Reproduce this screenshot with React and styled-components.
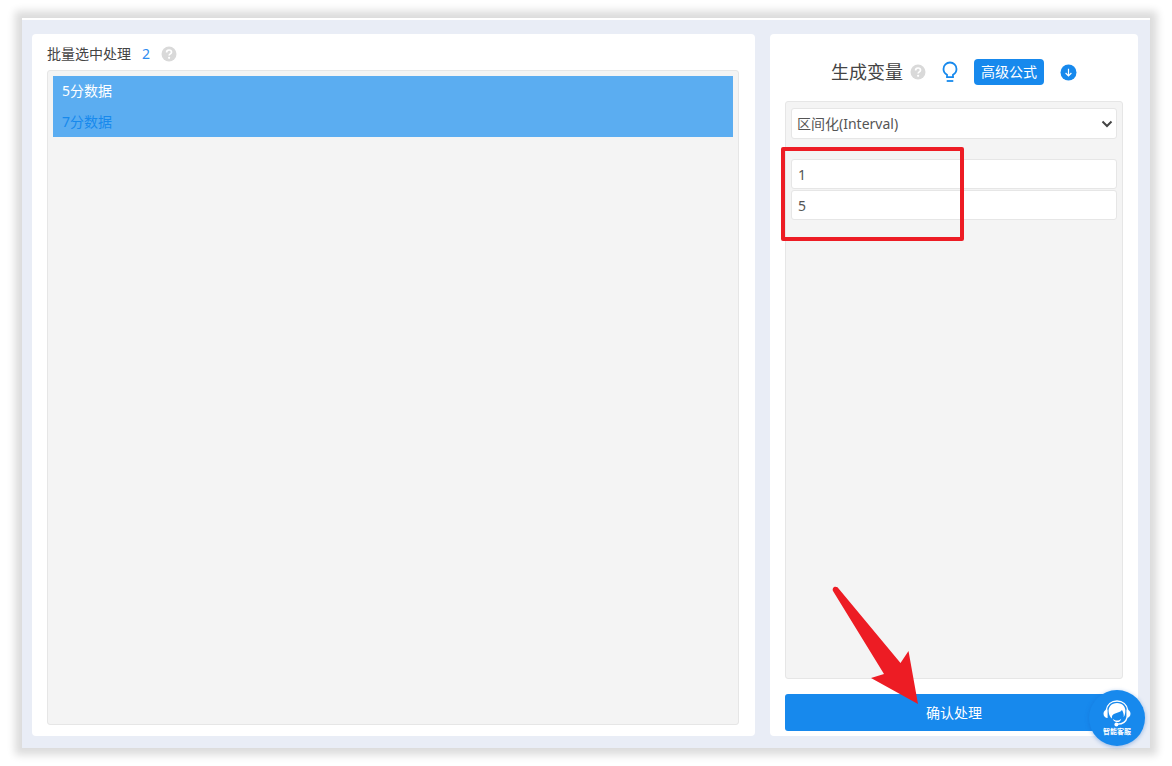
/**
 * Variable generation page.
 * Left panel lists the selected titles, right panel holds the settings of the chosen method.
 */

import { useState } from "react";
import styled, { createGlobalStyle } from "styled-components";

const GlobalStyle = createGlobalStyle`
  * {
    box-sizing: border-box;
  }

  body {
    margin: 0;
    background: #fff;
    color: #444;
    font-family: "Noto Sans", "Noto Sans CJK SC", sans-serif;
    font-size: 14px;
    line-height: 20px;
  }

  button,
  input,
  select {
    font: inherit;
  }
`;

const Page = styled.div`
  display: flex;
  min-height: 100vh;
  padding: 18px 22px;
`;

const Frame = styled.div`
  position: relative;
  flex: 1;
  display: grid;
  grid-template-columns: minmax(0, 1fr) 368px;
  gap: 15px;
  padding: 14px 12px 12px 10px;
  background: #e9edf6;
  border-top: 2px solid #fff;
  box-shadow: 0 0 8px 7px #dcdcdc;
`;

const Panel = styled.section`
  display: flex;
  flex-direction: column;
  padding: ${(props) => props.$padding};
  background: #fff;
  border-radius: 4px;
`;

const Well = styled.div`
  flex: 1;
  padding: 5px;
  background: #f4f4f4;
  border: 1px solid #e6e6e6;
  border-radius: 3px;
`;

const ListHeader = styled.header`
  display: flex;
  align-items: center;
  gap: 11px;
  margin-bottom: 6px;
`;

const ListTitle = styled.h2`
  margin: 0;
  font-size: 14px;
  font-weight: 400;
`;

const Count = styled.span`
  color: #2d8cf0;
`;

const TitleList = styled.ul`
  display: grid;
  gap: 1px;
  margin: 0;
  padding: 0;
  list-style: none;
  background: #5badf1;
`;

const TitleItem = styled.li`
  padding: 0 9px;
  line-height: 30px;
  color: ${(props) => (props.$active ? "#fff" : "#1789ed")};
`;

const ToolHeader = styled.header`
  display: flex;
  align-items: center;
  justify-content: center;
  gap: 16px;
  height: 26px;
  margin-bottom: 16px;
`;

const ToolTitle = styled.h1`
  display: flex;
  align-items: center;
  gap: 7px;
  margin: 0;
  font-size: 18px;
  font-weight: 400;
  line-height: 26px;
`;

const IconButton = styled.button`
  display: flex;
  padding: 0;
  border: 0;
  background: none;
  cursor: pointer;

  svg {
    display: block;
  }
`;

const FormulaButton = styled.button`
  height: 26px;
  padding: 0 7px;
  border: 0;
  border-radius: 4px;
  background: #1789ed;
  color: #fff;
  cursor: pointer;
`;

const SelectWrap = styled.div`
  position: relative;
  margin: 1px 0 20px;

  svg {
    position: absolute;
    top: 12px;
    right: 4px;
    pointer-events: none;
  }
`;

const MethodSelect = styled.select`
  display: block;
  appearance: none;
  width: 100%;
  height: 31px;
  padding: 0 20px 0 5px;
  border: 1px solid #e6e6e6;
  border-radius: 3px;
  background: #fff;
  color: #555;
`;

const Fields = styled.div`
  position: relative;
  display: grid;
  gap: 1px;
`;

const NumberInput = styled.input`
  width: 100%;
  height: 30px;
  padding: 0 6px;
  border: 1px solid #e6e6e6;
  border-radius: 3px;
  background: #fff;
  color: #555;
`;

const Highlight = styled.div`
  position: absolute;
  top: -12px;
  left: -10px;
  width: 183px;
  height: 94px;
  border: 4px solid #ed1c24;
  border-radius: 2px;
  pointer-events: none;
`;

const Footer = styled.footer`
  position: relative;
  margin-top: 15px;
`;

const ConfirmButton = styled.button`
  display: block;
  width: 100%;
  height: 37px;
  border: 0;
  border-radius: 3px;
  background: #1789ed;
  color: #fff;
  cursor: pointer;
`;

const Arrow = styled.svg`
  position: absolute;
  left: 46px;
  bottom: 26px;
  pointer-events: none;
`;

const Service = styled.button`
  position: absolute;
  right: 5px;
  bottom: 2px;
  display: flex;
  flex-direction: column;
  align-items: center;
  width: 56px;
  height: 56px;
  padding: 10px 0 0;
  border: 0;
  border-radius: 50%;
  background: #1789ed;
  box-shadow: 0 1px 4px rgba(23, 100, 200, 0.4);
  color: #fff;
  font-size: 7px;
  font-weight: 700;
  line-height: 10px;
  cursor: pointer;
`;

function HelpIcon() {
  return (
    <svg width="16" height="16" viewBox="0 0 16 16" aria-hidden="true">
      <circle cx="8" cy="8" r="7.5" fill="#d9d9d9" />
      <path
        d="M5.6 6.4C5.6 4.900 6.600 4 8 4s2.500.8 2.500 2.200c0 1.600-2.400 1.800-2.400 3.400"
        fill="none"
        stroke="#fff"
        strokeWidth="1.7"
      />
      <circle cx="8.1" cy="11.8" r="1.1" fill="#fff" />
    </svg>
  );
}

function BulbIcon() {
  return (
    <svg width="16" height="22" viewBox="0 0 16 22" fill="none" stroke="#1789ed" strokeWidth="1.8">
      <path d="M5 16.2v-2.4C2.8 12.6 1.5 10.5 1.5 8a6.5 6.5 0 0 1 13 0c0 2.5-1.3 4.6-3.5 5.8v2.4z" />
      <path d="M4.7 20h6.6" />
    </svg>
  );
}

function DownIcon() {
  return (
    <svg width="17" height="17" viewBox="0 0 17 17" fill="none">
      <circle cx="8.5" cy="8.5" r="8" fill="#1789ed" />
      <path d="M8.5 4.7v7M5.6 9l2.9 2.9L11.4 9" stroke="#fff" strokeWidth="1.2" />
    </svg>
  );
}

function HeadsetIcon() {
  return (
    <svg width="28" height="27" viewBox="0 0 28 27" fill="none">
      <path d="M3.2 10.5C4 4.500 8.400 1 14 1s10 3.500 10.800 9.500" stroke="#fff" strokeWidth="1.4" />
      <path
        d="M5.8 13C4.600 7 8.500 3 14 3s9.400 4 8.200 10c-.2 1.600-.7 3-1.500 4.300.2-2.900-.3-5.100-1.700-7.300-1.700 2.200-5 2.800-7.500 3.800-2 .8-3 2.200-2.500 4.700-1.700-1.200-2.900-3.300-3.200-5.500z"
        fill="#fff"
      />
      <path d="M4.600 9.500v8.500C2.300 18 .5 16.200.5 13.800s1.800-4.300 4.100-4.300zM23.400 9.500v8.500c2.300 0 4.100-1.800 4.100-4.200s-1.800-4.300-4.100-4.300z" fill="#fff" />
      <path d="M9.500 18.500c2.500 2.700 6.200 2.700 8.800.2-1.200 3.300-2.800 3.300-4.500 3.300s-3.100-.8-4.300-3.500z" fill="#fff" />
      <path d="M24 17.500c-.8 3.800-4 6.500-9.500 6.700" stroke="#fff" strokeWidth="1.3" />
      <circle cx="13.400" cy="24.400" r="2" fill="#fff" />
    </svg>
  );
}

const titles = ["5分数据", "7分数据"];

function App() {
  const [range, setRange] = useState({ min: "1", max: "5" });

  const handleChange = (e) => {
    setRange({ ...range, [e.target.name]: e.target.value });
  };

  return (
    <>
      <GlobalStyle />
      <Page>
        <Frame>
          <Panel $padding="10px 16px 11px 15px">
            <ListHeader>
              <ListTitle>批量选中处理</ListTitle>
              <Count>{titles.length}</Count>
              <HelpIcon />
            </ListHeader>
            <Well>
              <TitleList>
                {titles.map((title, index) => (
                  <TitleItem key={title} $active={index === 0}>
                    {title}
                  </TitleItem>
                ))}
              </TitleList>
            </Well>
          </Panel>

          <Panel $padding="25px 15px 5px">
            <ToolHeader>
              <ToolTitle>
                生成变量
                <HelpIcon />
              </ToolTitle>
              <IconButton type="button" aria-label="提示">
                <BulbIcon />
              </IconButton>
              <FormulaButton type="button">高级公式</FormulaButton>
              <IconButton type="button" aria-label="展开">
                <DownIcon />
              </IconButton>
            </ToolHeader>
            <Well>
              <SelectWrap>
                <MethodSelect aria-label="处理方法" defaultValue="interval">
                  <option value="interval">区间化(Interval)</option>
                </MethodSelect>
                <svg width="12" height="8" viewBox="0 0 12 8" fill="none">
                  <path d="M1.500 1.500 6 6l4.500-4.500" stroke="#444" strokeWidth="2" />
                </svg>
              </SelectWrap>
              <Fields>
                <NumberInput name="min" aria-label="最小值" value={range.min} onChange={handleChange} />
                <NumberInput name="max" aria-label="最大值" value={range.max} onChange={handleChange} />
                <Highlight />
              </Fields>
            </Well>
            <Footer>
              <ConfirmButton type="button">确认处理</ConfirmButton>
              <Arrow width="90" height="122" viewBox="0 0 90 122">
                <path
                  d="M2 8C.8 5 3.500 2.500 6.500 4.300L69.500 80 77.500 68 87 121 40 95 53 91z"
                  fill="#ed1c24"
                />
              </Arrow>
            </Footer>
          </Panel>

          <Service type="button">
            <HeadsetIcon />
            智能客服
          </Service>
        </Frame>
      </Page>
    </>
  );
}

export default App;
